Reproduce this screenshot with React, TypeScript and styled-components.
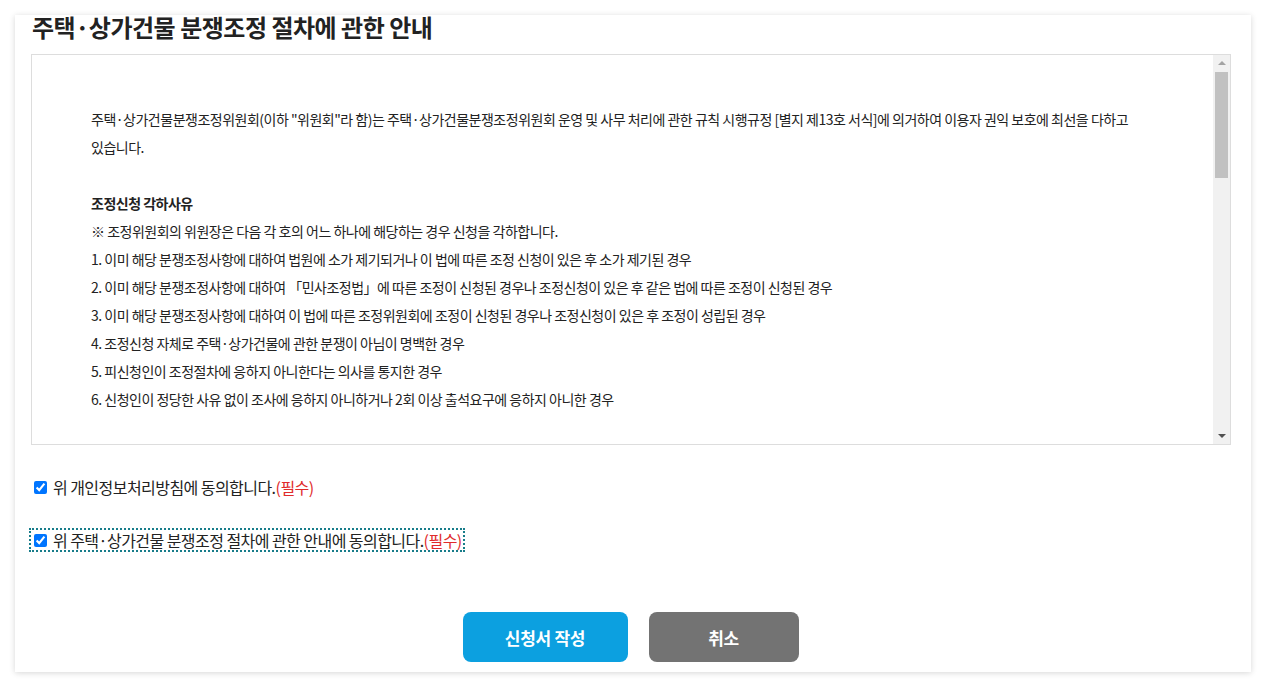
import React, { useState } from 'react';
import styled, { createGlobalStyle } from 'styled-components';

const GlobalStyle = createGlobalStyle`
  html, body {
    margin: 0;
    padding: 0;
    background: #fff;
  }
  body {
    font-family: "Noto Sans CJK KR", "Noto Sans", sans-serif;
    color: #222;
  }
  * {
    box-sizing: border-box;
  }
`;

const Page = styled.div`
  padding: 15px 16px 16px 15px;
`;

const Card = styled.section`
  background: #fff;
  box-shadow: 0 1px 6px rgba(0, 0, 0, 0.16);
  padding: 0 20px 10px 16px;
`;

const Title = styled.h2`
  margin: 0;
  font-size: 24px;
  line-height: 24px;
  height: 39px;
  font-weight: 700;
  color: #222;
  padding-left: 1px;
  letter-spacing: -0.5px;
`;

const Frame = styled.div`
  display: flex;
  height: 391px;
  border: 1px solid #ddd;
`;

const Content = styled.div`
  flex: 1;
  overflow-y: auto;
  scrollbar-width: none;
  padding: 50px 60px 0 59px;
  font-size: 14px;
  line-height: 28px;
  letter-spacing: -0.5px;
  word-break: keep-all;
  color: #222;

  &::-webkit-scrollbar {
    display: none;
  }
`;

const Rail = styled.div`
  width: 17px;
  flex: none;
  display: flex;
  flex-direction: column;
  background: #f1f1f1;
`;

const Arrow = styled.div<{ $dir: 'up' | 'down' }>`
  height: 17px;
  display: flex;
  align-items: center;
  justify-content: center;

  &::after {
    content: '';
    width: 0;
    height: 0;
    border-left: 4px solid transparent;
    border-right: 4px solid transparent;
    ${(p) =>
      p.$dir === 'up'
        ? 'border-bottom: 4px solid #a3a3a3; margin-top: -1px;'
        : 'border-top: 4px solid #505050; margin-top: 1px;'}
  }
`;

const Track = styled.div`
  flex: 1;
  padding: 0 2px;
`;

const Thumb = styled.div<{ $h: number }>`
  height: ${(p) => p.$h}px;
  background: #c1c1c1;
`;

const Para = styled.p`
  margin: 0;
`;

const Heading = styled.p`
  margin: 0;
  font-weight: 700;
`;

const Gap = styled.div`
  height: 28px;
`;

const Agreements = styled.div`
  display: flex;
  flex-direction: column;
  align-items: flex-start;
  gap: 33px;
  padding: 32px 0 0 0;
`;

const Agree = styled.label<{ $focused?: boolean }>`
  display: inline-flex;
  align-items: center;
  gap: 6px;
  font-size: 16px;
  line-height: 20px;
  letter-spacing: -0.55px;
  color: #222;
  cursor: pointer;
  outline: ${(p) => (p.$focused ? '2px dotted #177c8a' : 'none')};
  outline-offset: 0;
  padding-left: 1px;
  padding-right: 1px;
`;

const Check = styled.input`
  width: 13px;
  height: 13px;
  margin: 0 0 0 2px;
  accent-color: #0075ff;
`;

const Required = styled.span`
  color: #e02b2b;
`;

const Buttons = styled.div`
  display: flex;
  justify-content: center;
  gap: 21px;
  padding-top: 62px;
  padding-right: 1px;
`;

const Button = styled.button<{ $tone: 'primary' | 'gray'; $w: number }>`
  width: ${(p) => p.$w}px;
  height: 50px;
  border: 0;
  border-radius: 8px;
  background: ${(p) => (p.$tone === 'primary' ? '#0ca0e0' : '#737373')};
  color: #fff;
  font-family: "Noto Sans CJK KR", sans-serif;
  font-size: 17px;
  font-weight: 700;
  letter-spacing: -0.3px;
  cursor: pointer;
`;

const reasons = [
  '1. 이미 해당 분쟁조정사항에 대하여 법원에 소가 제기되거나 이 법에 따른 조정 신청이 있은 후 소가 제기된 경우',
  '2. 이미 해당 분쟁조정사항에 대하여 「민사조정법」에 따른 조정이 신청된 경우나 조정신청이 있은 후 같은 법에 따른 조정이 신청된 경우',
  '3. 이미 해당 분쟁조정사항에 대하여 이 법에 따른 조정위원회에 조정이 신청된 경우나 조정신청이 있은 후 조정이 성립된 경우',
  '4. 조정신청 자체로 주택·상가건물에 관한 분쟁이 아님이 명백한 경우',
  '5. 피신청인이 조정절차에 응하지 아니한다는 의사를 통지한 경우',
  '6. 신청인이 정당한 사유 없이 조사에 응하지 아니하거나 2회 이상 출석요구에 응하지 아니한 경우',
];

const stops = [
  '1. 신청인이 조정신청을 취하한 경우',
  '2. 조정절차 진행 중 당사자 일방이 법원에 소를 제기한 경우',
  '3. 조정위원회가 조정을 하지 아니하기로 결정한 경우',
  '4. 조정기간 내에 조정이 성립되지 아니한 경우',
];

const closes = [
  '1. 당사자가 조정안을 수락하여 조정이 성립된 경우',
  '2. 조정안을 제시받은 당사자가 통지를 받은 날부터 7일 이내에 수락 의사를 표시하지 아니한 경우',
  '3. 조정위원회가 조정안을 작성하기 어렵다고 판단하여 조정절차를 종료한 경우',
];

const notes = [
  '※ 조정을 신청하는 자는 조정위원회 운영규정에서 정하는 수수료를 납부하여야 합니다.',
  '※ 조정서는 집행력 있는 집행권원과 같은 효력을 가집니다. 다만, 청구에 관한 이의의 제한 규정은 적용하지 아니합니다.',
  '※ 조정위원회는 조정절차를 비공개로 진행하며, 조정위원과 사무국 직원은 업무상 알게 된 정보를 누설하여서는 아니됩니다.',
];

export default function App() {
  const [privacy, setPrivacy] = useState(true);
  const [guide, setGuide] = useState(true);

  return (
    <>
      <GlobalStyle />
      <Page>
        <Card>
          <Title>주택·상가건물 분쟁조정 절차에 관한 안내</Title>
          <Frame>
            <Content>
              <Para>
                주택·상가건물분쟁조정위원회(이하 "위원회"라 함)는 주택·상가건물분쟁조정위원회 운영 및 사무 처리에 관한 규칙 시행규정 [별지 제13호 서식]에 의거하여 이용자 권익 보호에 최선을 다하고 있습니다.
              </Para>
              <Gap />
              <Heading>조정신청 각하사유</Heading>
              <Para>※ 조정위원회의 위원장은 다음 각 호의 어느 하나에 해당하는 경우 신청을 각하합니다.</Para>
              {reasons.map((r) => (
                <Para key={r}>{r}</Para>
              ))}
              <Gap />
              <Heading>조정절차의 종료사유</Heading>
              <Para>※ 조정위원회는 다음 각 호의 어느 하나에 해당하는 경우 조정절차를 종료합니다.</Para>
              {stops.map((r) => (
                <Para key={r}>{r}</Para>
              ))}
              <Gap />
              <Heading>조정의 성립</Heading>
              {closes.map((r) => (
                <Para key={r}>{r}</Para>
              ))}
              <Gap />
              <Heading>기타 안내사항</Heading>
              {notes.map((r) => (
                <Para key={r}>{r}</Para>
              ))}
              <Gap />
              <Para>위 내용을 충분히 숙지하신 후 분쟁조정 신청서를 작성하여 주시기 바랍니다.</Para>
              <Gap />
            </Content>
            <Rail>
              <Arrow $dir="up" />
              <Track>
                <Thumb $h={106} />
              </Track>
              <Arrow $dir="down" />
            </Rail>
          </Frame>
          <Agreements>
            <Agree>
              <Check type="checkbox" checked={privacy} onChange={(e) => setPrivacy(e.target.checked)} />
              <span>
                위 개인정보처리방침에 동의합니다.<Required>(필수)</Required>
              </span>
            </Agree>
            <Agree $focused>
              <Check type="checkbox" checked={guide} onChange={(e) => setGuide(e.target.checked)} />
              <span>
                위 주택·상가건물 분쟁조정 절차에 관한 안내에 동의합니다.<Required>(필수)</Required>
              </span>
            </Agree>
          </Agreements>
          <Buttons>
            <Button $tone="primary" $w={165}>신청서 작성</Button>
            <Button $tone="gray" $w={150}>취소</Button>
          </Buttons>
        </Card>
      </Page>
    </>
  );
}
